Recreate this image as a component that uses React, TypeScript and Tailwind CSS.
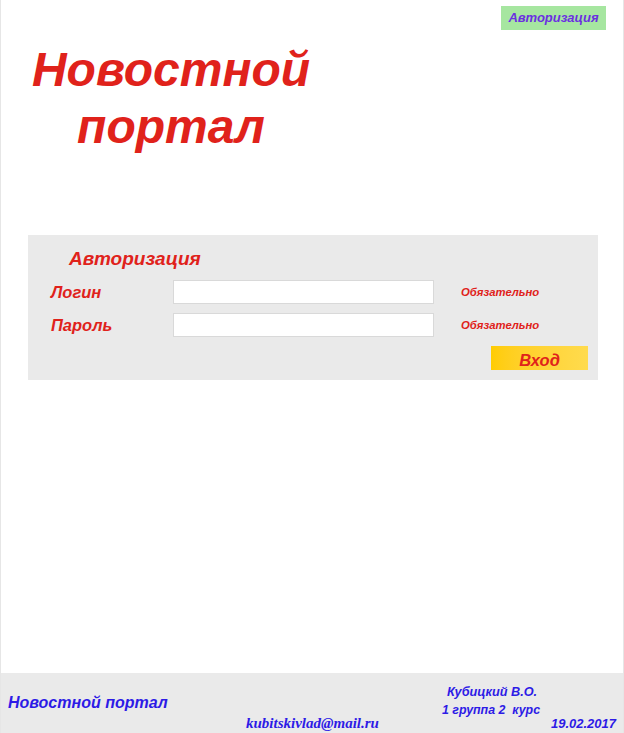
import React from "react";

const sans = { fontFamily: '"Liberation Sans", Arial, sans-serif' };

export default function App() {
  return (
    <div
      className="w-[624px] h-[733px] bg-white border-l border-r border-[#e6e6e6] flex flex-col italic font-bold overflow-hidden"
      style={sans}
    >
      <div className="flex justify-end pt-[6px] pr-[17px]">
        <button className="w-[105px] h-[24px] bg-[#a6e6a0] text-[#6b2fe0] text-[13px] font-bold italic flex items-center justify-center">
          Авторизация
        </button>
      </div>

      <div className="ml-[28px] w-[284px] mt-[11px] text-center text-[#e0221b] text-[48px] leading-[57px]">
        Новостной портал
      </div>

      <div className="mt-[80px] mr-[25px] ml-[27px] h-[145px] bg-[#eaeaea] flex flex-col">
        <div className="pl-[41px] pt-[12px] text-[#e0221b] text-[19px] leading-[24px]">Авторизация</div>
        <div className="flex flex-col gap-[9px] mt-[9px]">
          {["Логин", "Пароль"].map((l) => (
            <div key={l} className="flex items-center h-[24px]">
              <div className="w-[145px] pl-[23px] text-[#e0221b] text-[16.5px]">{l}</div>
              <input className="w-[261px] h-[24px] bg-white border border-[#d9d9d9] outline-none" />
              <div className="ml-[27px] text-[#e0221b] text-[11.3px]">Обязательно</div>
            </div>
          ))}
        </div>
        <div className="flex justify-end pr-[10px] mt-[9px]">
          <button className="w-[97px] h-[24px] bg-gradient-to-r from-[#ffcc00] to-[#ffdb4d] text-[#e0221b] text-[16.5px] font-bold italic flex items-center justify-center pt-[5px] leading-none">
            Вход
          </button>
        </div>
      </div>

      <div className="flex-1" />

      <div className="h-[60px] bg-[#eaeaea] flex text-[#2d1be6]">
        <div className="w-[245px] pl-[7px] self-center text-[16px]">Новостной портал</div>
        <div
          className="self-end pb-[1px] text-[15px] leading-[17px]"
          style={{ fontFamily: '"Liberation Serif", "Times New Roman", serif' }}
        >
          kubitskivlad@mail.ru
        </div>
        <div className="ml-auto w-[182px] flex flex-col pt-[10px]">
          <div className="w-[102px] text-center text-[12.7px] leading-[18px]">Кубицкий В.О.</div>
          <div className="w-[100px] text-center text-[12.4px] leading-[18px]">1 группа 2&nbsp; курс</div>
          <div className="text-right pr-[7px] text-[13px] leading-[14px] -mt-[2px]">19.02.2017</div>
        </div>
      </div>
    </div>
  );
}
